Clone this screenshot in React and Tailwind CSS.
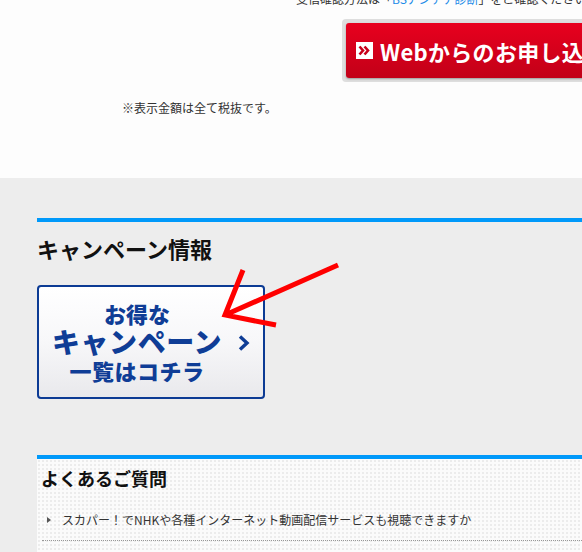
import React from 'react';

const faqs = ['スカパー！でNHKや各種インターネット動画配信サービスも視聴できますか'];

const App = () => {
    return (
        <div className="relative w-full h-[552px] overflow-hidden bg-[#ededed] font-['Noto_Sans_CJK_JP',sans-serif] text-[#333]">
            <div className="h-[178px] bg-[#fdfdfd] overflow-hidden">
                <div className="-mt-[9px] pl-[296px] text-[12px] leading-[16px] whitespace-nowrap text-[#333]">
                    受信確認方法は「<span className="text-[#1a8be8]">BSアンテナ診断</span>」をご確認ください。
                </div>
                <div className="ml-[342px] mt-[12px] w-[260px] rounded-[4px] bg-[#dedede] p-[4px] pr-0">
                    <div className="h-[55px] rounded-l-[3px] bg-gradient-to-b from-[#e8001e] to-[#c20018] flex items-center pl-[10px] gap-[7px] shadow-[0_1px_2px_rgba(0,0,0,0.3)]">
                        <svg width="17" height="17" viewBox="0 0 17 17" className="shrink-0">
                            <rect width="17" height="17" fill="#fff" />
                            <path d="M3.5 4.5 L7 8.5 L3.5 12.5 M8.5 4.5 L12 8.5 L8.5 12.5" fill="none" stroke="#c8001a" strokeWidth="2.6" />
                        </svg>
                        <span className="text-[22px] tracking-[0.3px] font-bold text-white leading-none whitespace-nowrap">Webからのお申し込み</span>
                    </div>
                </div>
                <p className="mt-[18px] pl-[122px] text-[12px] leading-[16px] text-[#333]">※表示金額は全て税抜です。</p>
            </div>

            <div className="pt-[40px] pl-[37px]">
                <div className="h-[4px] bg-[#0099fa]" />
                <h2 className="mt-[11px] text-[22px] leading-[30px] font-bold text-[#111]">キャンペーン情報</h2>
                <a className="relative mt-[22px] block w-[228px] h-[114px] rounded-[4px] border-2 border-[#0c3b94] bg-gradient-to-b from-[#ffffff] via-[#f7f7f9] to-[#e9e9ec] pl-[14px] pr-[42px] pt-[14px] text-[#0f3d96] font-black">
                    <div className="flex flex-col items-center">
                        <span className="text-[22px] leading-[24px]">お得な</span>
                        <span className="mt-[1px] text-[28px] leading-[30px] tracking-[0.6px] whitespace-nowrap">キャンペーン</span>
                        <span className="mt-[2px] text-[22px] leading-[24px] tracking-[0.5px]">一覧はコチラ</span>
                    </div>
                    <svg width="12" height="16" viewBox="0 0 12 16" className="absolute left-[199px] top-[48px]">
                        <path d="M2 1.5 L9 8 L2 14.5" fill="none" stroke="#0f3d96" strokeWidth="3.4" />
                    </svg>
                </a>

                <div className="mt-[56px] h-[4px] bg-[#0099fa]" />
                <div className="bg-[#fbfbfb] bg-[radial-gradient(#ececec_1px,transparent_1px)] bg-[length:4px_4px] pb-[20px]">
                    <h2 className="pt-[6px] pl-[4px] text-[18px] leading-[26px] font-bold text-[#111]">よくあるご質問</h2>
                    <ul className="mt-[21px]">
                        {faqs.map((q, i) => (
                            <li key={i} className="ml-[5px] flex items-center border-b border-dotted border-[#999] pb-[12px]">
                                <span className="ml-[5px] w-0 h-0 border-y-[3px] border-y-transparent border-l-[4px] border-l-[#555]" />
                                <span className="ml-[11px] text-[12px] leading-[16px] text-[#333] whitespace-nowrap">{q}</span>
                            </li>
                        ))}
                    </ul>
                </div>
            </div>

            <svg className="absolute left-0 top-0 pointer-events-none" width="582" height="552">
                <path d="M338 265 L225 315 M243 270 L225 315 L276 325" fill="none" stroke="#ff0000" strokeWidth="5" />
            </svg>
        </div>
    );
};

export default App;
